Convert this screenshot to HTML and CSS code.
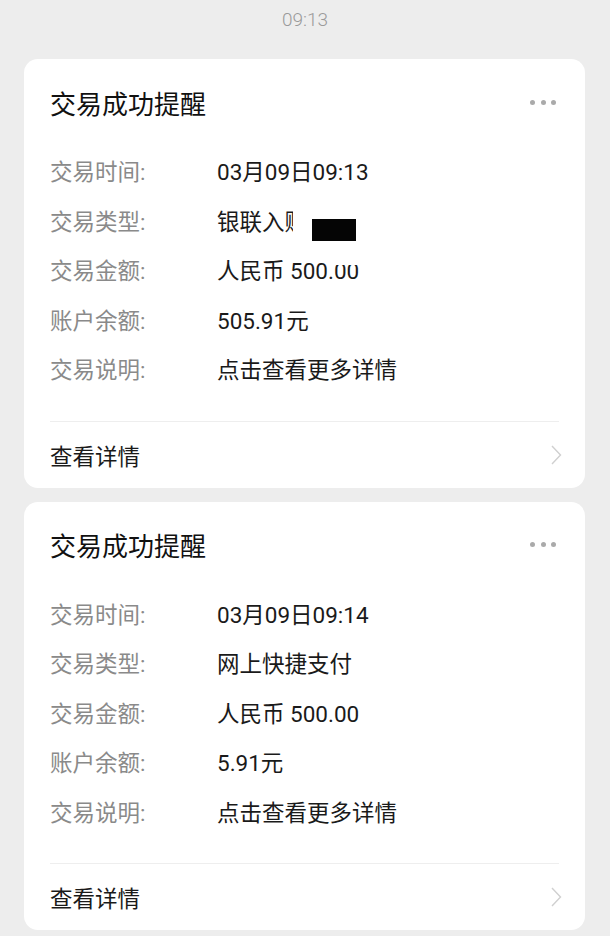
FILE: index.html
```html
<!DOCTYPE html>
<html lang="zh-CN">
<head>
    <meta charset="UTF-8">
    <link rel="stylesheet" href="styles.css">
</head>
<body>
    <div class="time">09:13</div>

    <div class="card">
        <div class="card-head">
            <span class="title">交易成功提醒</span>
            <span class="dots"><i></i><i></i><i></i></span>
        </div>
        <div class="rows">
            <div class="row"><span class="label">交易时间:</span><span class="value">03月09日09:13</span></div>
            <div class="row"><span class="label">交易类型:</span><span class="value"><span class="clip">银联入账</span><span class="mask"></span></span></div>
            <div class="row"><span class="label">交易金额:</span><span class="value">人民币 500.<span class="cut">00</span></span></div>
            <div class="row"><span class="label">账户余额:</span><span class="value">505.91元</span></div>
            <div class="row"><span class="label">交易说明:</span><span class="value">点击查看更多详情</span></div>
        </div>
        <div class="footer">
            <span>查看详情</span>
            <svg class="chevron" width="11" height="20" viewBox="0 0 11 20"><path d="M1 1 L9.5 10 L1 19" fill="none" stroke="#d0d0d0" stroke-width="1.4"/></svg>
        </div>
    </div>

    <div class="card">
        <div class="card-head">
            <span class="title">交易成功提醒</span>
            <span class="dots"><i></i><i></i><i></i></span>
        </div>
        <div class="rows">
            <div class="row"><span class="label">交易时间:</span><span class="value">03月09日09:14</span></div>
            <div class="row"><span class="label">交易类型:</span><span class="value">网上快捷支付</span></div>
            <div class="row"><span class="label">交易金额:</span><span class="value">人民币 500.00</span></div>
            <div class="row"><span class="label">账户余额:</span><span class="value">5.91元</span></div>
            <div class="row"><span class="label">交易说明:</span><span class="value">点击查看更多详情</span></div>
        </div>
        <div class="footer">
            <span>查看详情</span>
            <svg class="chevron" width="11" height="20" viewBox="0 0 11 20"><path d="M1 1 L9.5 10 L1 19" fill="none" stroke="#d0d0d0" stroke-width="1.4"/></svg>
        </div>
    </div>
</body>
</html>
```

FILE: styles.css
```css
*{
    box-sizing: border-box;
}
body{
    margin: 0;
    background: #ededed;
    font-family: Roboto, "Noto Sans CJK SC", sans-serif;
    color: #1a1a1a;
}
.time{
    height: 39px;
    line-height: 39px;
    text-align: center;
    font-size: 19px;
    font-weight: 300;
    color: #9a9a9a;
    margin-bottom: 20px;
}
.card{
    background: white;
    margin: 0 25px 14px 24px;
    border-radius: 14px;
    padding: 0 26px;
}
.card-head{
    height: 86px;
    display: flex;
    align-items: center;
    justify-content: space-between;
}
.title{
    font-size: 26px;
    color: #111;
}
.dots{
    display: flex;
    gap: 5.5px;
    margin-right: 3px;
}
.dots i{
    width: 5px;
    height: 5px;
    border-radius: 50%;
    background: #aaa;
}
.rows{
    padding: 3px 0 25px;
}
.row{
    display: flex;
    line-height: 49.5px;
    font-size: 22.5px;
}
.label{
    width: 167px;
    color: #8a8a8a;
}
.value{
    color: #1a1a1a;
}
.clip{
    display: inline-block;
    width: 76px;
    overflow: hidden;
    white-space: nowrap;
    vertical-align: top;
}
.mask{
    display: inline-block;
    width: 44px;
    height: 22px;
    background: #050505;
    margin-left: 19px;
    vertical-align: -11px;
}
.cut{
    position: relative;
}
.cut::after{
    content: "";
    position: absolute;
    left: 0;
    right: 0;
    top: 2px;
    height: 4.5px;
    background: white;
}
.footer{
    height: 67px;
    border-top: 1px solid #eeeeee;
    display: flex;
    align-items: center;
    justify-content: space-between;
    font-size: 22.5px;
    color: #1a1a1a;
}
.chevron{
    margin-right: -3px;
}
```
